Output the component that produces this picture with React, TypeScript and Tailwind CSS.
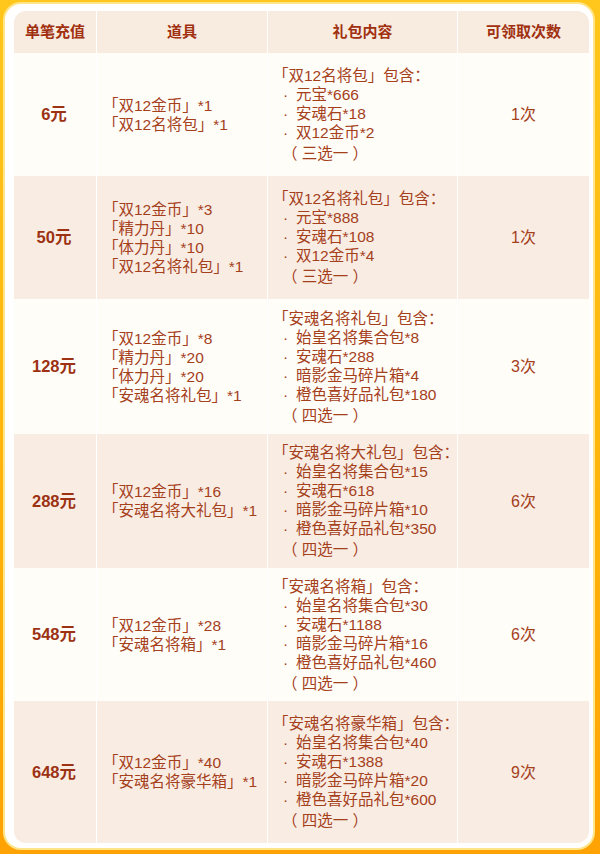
type Row = {
  price: string;
  items: string[];
  packTitle: string;
  packItems: string[];
  choose: string;
  count: string;
  height: string;
  tinted: boolean;
};

const ROWS: Row[] = [
  {
    price: "6元",
    items: ["「双12金币」*1", "「双12名将包」*1"],
    packTitle: "「双12名将包」包含：",
    packItems: ["元宝*666", "安魂石*18", "双12金币*2"],
    choose: "（ 三选一 ）",
    count: "1次",
    height: "h-[123px]",
    tinted: false,
  },
  {
    price: "50元",
    items: ["「双12金币」*3", "「精力丹」*10", "「体力丹」*10", "「双12名将礼包」*1"],
    packTitle: "「双12名将礼包」包含：",
    packItems: ["元宝*888", "安魂石*108", "双12金币*4"],
    choose: "（ 三选一 ）",
    count: "1次",
    height: "h-[123px]",
    tinted: true,
  },
  {
    price: "128元",
    items: ["「双12金币」*8", "「精力丹」*20", "「体力丹」*20", "「安魂名将礼包」*1"],
    packTitle: "「安魂名将礼包」包含：",
    packItems: ["始皇名将集合包*8", "安魂石*288", "暗影金马碎片箱*4", "橙色喜好品礼包*180"],
    choose: "（ 四选一 ）",
    count: "3次",
    height: "h-[135px]",
    tinted: false,
  },
  {
    price: "288元",
    items: ["「双12金币」*16", "「安魂名将大礼包」*1"],
    packTitle: "「安魂名将大礼包」包含：",
    packItems: ["始皇名将集合包*15", "安魂石*618", "暗影金马碎片箱*10", "橙色喜好品礼包*350"],
    choose: "（ 四选一 ）",
    count: "6次",
    height: "h-[134px]",
    tinted: true,
  },
  {
    price: "548元",
    items: ["「双12金币」*28", "「安魂名将箱」*1"],
    packTitle: "「安魂名将箱」包含：",
    packItems: ["始皇名将集合包*30", "安魂石*1188", "暗影金马碎片箱*16", "橙色喜好品礼包*460"],
    choose: "（ 四选一 ）",
    count: "6次",
    height: "h-[133px]",
    tinted: false,
  },
  {
    price: "648元",
    items: ["「双12金币」*40", "「安魂名将豪华箱」*1"],
    packTitle: "「安魂名将豪华箱」包含：",
    packItems: ["始皇名将集合包*40", "安魂石*1388", "暗影金马碎片箱*20", "橙色喜好品礼包*600"],
    choose: "（ 四选一 ）",
    count: "9次",
    height: "h-[142px]",
    tinted: true,
  },
];

const GRID = "grid grid-cols-[82px_170px_189px_1fr] gap-x-px";

export default function App() {
  return (
    <div
      className="h-[854px] w-[600px] bg-gradient-to-b from-[#ffc61c] via-[#ffb60c] to-[#ffa204] pt-[4px] pl-[5px] pr-[7px] pb-[6px]"
      style={{ fontFamily: '"Liberation Sans", "Noto Sans CJK SC", sans-serif' }}
    >
      <div className="h-full rounded-[16px] bg-white pt-[7px] pl-[9px] pr-[4px] pb-[5px] shadow-[0_0_0_2px_#ffe58a]">
        <div className="h-full overflow-hidden rounded-[12px] bg-white">
          <div className={`${GRID} h-[42px] text-[15px] font-bold text-[#a0300f]`}>
            {["单笔充值", "道具", "礼包内容", "可领取次数"].map((h) => (
              <div key={h} className="flex items-center justify-center bg-[#f8ebe0]">
                {h}
              </div>
            ))}
          </div>
          {ROWS.map((row) => {
            const bg = row.tinted ? "bg-[#f9ede3]" : "bg-[#fffdf7]";
            return (
              <div
                key={row.price}
                className={`${GRID} ${row.height} whitespace-nowrap text-[15.5px] leading-[19px] text-[#a5401c]`}
              >
                <div className={`${bg} flex items-center justify-center pr-[2px] text-[16.5px] font-bold text-[#9c3213]`}>
                  {row.price}
                </div>
                <div className={`${bg} flex flex-col justify-center pl-[6px]`}>
                  {row.items.map((t) => (
                    <div key={t}>{t}</div>
                  ))}
                </div>
                <div className={`${bg} flex flex-col justify-center pl-[5px]`}>
                  <div>{row.packTitle}</div>
                  {row.packItems.map((t) => (
                    <div key={t} className="flex">
                      <span className="w-[23px] pl-[10px]">·</span>
                      <span>{t}</span>
                    </div>
                  ))}
                  <div className="mt-[2px] pl-[9px]">{row.choose}</div>
                </div>
                <div className={`${bg} flex items-center justify-center text-[16px]`}>{row.count}</div>
              </div>
            );
          })}
        </div>
      </div>
    </div>
  );
}
